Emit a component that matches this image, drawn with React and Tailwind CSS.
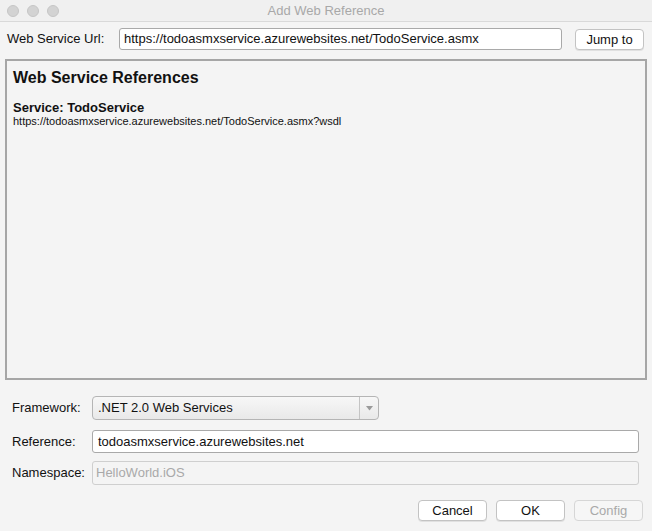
import React from 'react';

const font = { fontFamily: '"Liberation Sans", Arial, sans-serif' };

function Btn({ children, disabled, className = '' }) {
  return (
    <button
      className={`h-[21px] w-[69px] rounded-[4px] border text-[13px] leading-none ${
        disabled
          ? 'border-[#d6d6d6] bg-[#f6f6f6] text-[#a9a9a9]'
          : 'border-[#c3c3c3] bg-white text-[#111] shadow-[0_1px_0_rgba(0,0,0,0.08)]'
      } ${className}`}
    >
      {children}
    </button>
  );
}

function Row({ label, children, className = '' }) {
  return (
    <div className={`flex items-center ${className}`}>
      <div className="w-[80px] shrink-0 text-[13px] text-[#111]">{label}</div>
      {children}
    </div>
  );
}

export default function App() {
  return (
    <div style={font} className="w-[652px] h-[531px] bg-[#f4f4f4] flex flex-col overflow-hidden">
      {/* Title bar */}
      <div className="h-[22px] shrink-0 flex items-center relative border-b border-[#d9d9d9] bg-[#f0f0f0]">
        <div className="flex gap-[8px] pl-[7px]">
          <span className="w-[12px] h-[12px] rounded-full bg-[#d3d3d3] border border-[#c6c6c6]" />
          <span className="w-[12px] h-[12px] rounded-full bg-[#d3d3d3] border border-[#c6c6c6]" />
          <span className="w-[12px] h-[12px] rounded-full bg-[#d3d3d3] border border-[#c6c6c6]" />
        </div>
        <div className="absolute inset-0 flex items-center justify-center text-[13px] text-[#a8a8a8]">
          Add Web Reference
        </div>
      </div>

      {/* URL row */}
      <div className="flex items-center h-[22px] pl-[7px] pr-[8px] mt-[6px]">
        <div className="w-[112px] text-[13px] text-[#111]">Web Service Url:</div>
        <div className="w-[443px] h-[22px] bg-white border border-[#a9a9a9] rounded-[3px] flex items-center px-[4px] text-[13px] text-[#111]">
          https://todoasmxservice.azurewebsites.net/TodoService.asmx
        </div>
        <Btn className="ml-auto">Jump to</Btn>
      </div>

      {/* References panel */}
      <div className="mx-[5px] mt-[9px] h-[321px] border-2 border-[#a6a6a6] bg-[#f4f4f4] px-[6px] pt-[7px]">
        <div className="text-[16px] font-bold leading-[20px] text-[#111]">Web Service References</div>
        <div className="mt-[12px] text-[13px] font-bold leading-[15px] text-[#111]">Service: TodoService</div>
        <div className="text-[11px] leading-[12px] text-[#111]">
          https://todoasmxservice.azurewebsites.net/TodoService.asmx?wsdl
        </div>
      </div>

      {/* Form */}
      <div className="flex flex-col pl-[12px] pr-[13px] mt-[16px]">
        <Row label="Framework:">
          <div className="w-[287px] h-[24px] flex rounded-[4px] border border-[#b5b5b5] bg-gradient-to-b from-[#f7f7f7] to-[#e9e9e9] overflow-hidden">
            <div className="flex-1 flex items-center px-[5px] text-[13px] text-[#111]">.NET 2.0 Web Services</div>
            <div className="w-[19px] border-l border-[#c4c4c4] flex items-center justify-center">
              <svg width="7" height="5" viewBox="0 0 7 5">
                <path d="M0 0 L7 0 L3.5 4.5 Z" fill="#9a9a9a" />
              </svg>
            </div>
          </div>
        </Row>
        <Row label="Reference:" className="mt-[10px]">
          <div className="flex-1 h-[23px] bg-white border border-[#a9a9a9] rounded-[3px] flex items-center px-[5px] text-[13px] text-[#111]">
            todoasmxservice.azurewebsites.net
          </div>
        </Row>
        <Row label="Namespace:" className="mt-[8px]">
          <div className="flex-1 h-[24px] bg-[#f4f4f4] border border-[#cfcfcf] rounded-[3px] flex items-center px-[3px] text-[13px] text-[#a9a9a9]">
            HelloWorld.iOS
          </div>
        </Row>
      </div>

      {/* Buttons */}
      <div className="flex justify-end gap-[9px] pr-[9px] mt-[15px]">
        <Btn>Cancel</Btn>
        <Btn>OK</Btn>
        <Btn disabled>Config</Btn>
      </div>
    </div>
  );
}
